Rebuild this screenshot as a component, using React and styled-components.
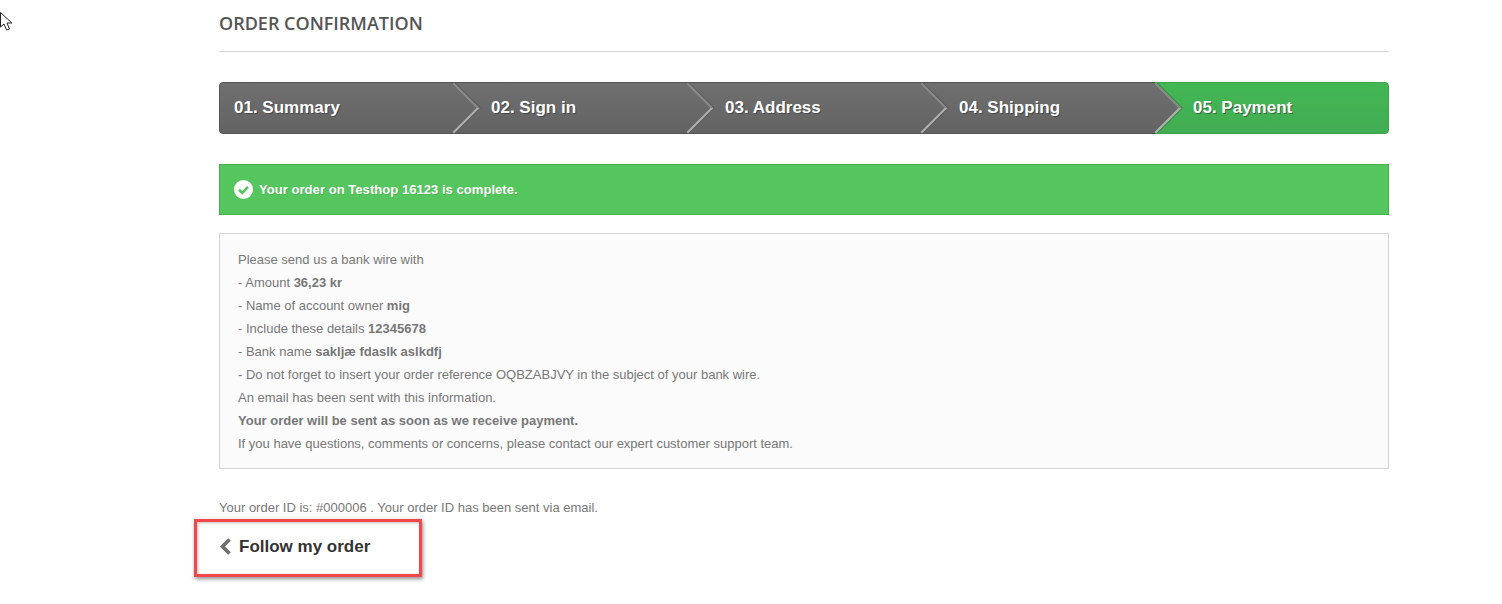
import React from "react"
import styled, { createGlobalStyle } from "styled-components"

const steps = ["01. Summary", "02. Sign in", "03. Address", "04. Shipping", "05. Payment"]

const App = () => {
  return (
    <Page>
      <GlobalStyle />
      <Cursor width="14" height="20" viewBox="0 0 14 20">
        <path
          d="M0.5 0.5 L0.5 15 L4 12 L6.5 18 L9.5 17 L7 11 L12 11 Z"
          fill="#fff"
          stroke="#222"
          strokeWidth="1"
        />
      </Cursor>

      <Container>
        <Heading>Order confirmation</Heading>

        <Steps>
          {steps.map((label, index) => {
            const current = index === steps.length - 1
            return (
              <Step key={label} $current={current} $first={index === 0} $layer={steps.length - index}>
                {label}
                {!current && <Arrow />}
              </Step>
            )
          })}
        </Steps>

        <Success>
          <svg width="19" height="19" viewBox="0 0 19 19">
            <circle cx="9.5" cy="9.5" r="9.5" fill="#fff" />
            <path d="M5 9.8 L8.3 13 L14 6.8" fill="none" stroke="#55c65e" strokeWidth="2.6" />
          </svg>
          Your order on Testhop 16123 is complete.
        </Success>

        <InfoBox>
          <Line>Please send us a bank wire with</Line>
          <Line>- Amount <strong>36,23 kr</strong></Line>
          <Line>- Name of account owner <strong>mig</strong></Line>
          <Line>- Include these details <strong>12345678</strong></Line>
          <Line>- Bank name <strong>sakljæ fdaslk aslkdfj</strong></Line>
          <Line>- Do not forget to insert your order reference OQBZABJVY in the subject of your bank wire.</Line>
          <Line>An email has been sent with this information.</Line>
          <Line><strong>Your order will be sent as soon as we receive payment.</strong></Line>
          <Line>If you have questions, comments or concerns, please contact our expert customer support team.</Line>
        </InfoBox>

        <OrderId>Your order ID is: #000006 . Your order ID has been sent via email.</OrderId>

        <FollowLink href="#">
          <svg width="13" height="17" viewBox="0 0 13 17">
            <path d="M10.5 1.5 L3.5 8.5 L10.5 15.5" fill="none" stroke="#6f6f6f" strokeWidth="3.8" />
          </svg>
          Follow my order
          <Highlight />
        </FollowLink>
      </Container>
    </Page>
  )
}

export default App

const GlobalStyle = createGlobalStyle`
  body {
    margin: 0;
    background: #fff;
    font-family: "Liberation Sans", Arial, sans-serif;
  }
`
const Page = styled.div`
  position: relative;
  height: 604px;
  overflow: hidden;
  padding-left: 219px;
  box-sizing: border-box;
`
const Cursor = styled.svg`
  position: absolute;
  left: 0;
  top: 12px;
`
const Container = styled.div`
  width: 1170px;
`
const Heading = styled.h1`
  margin: 0 0 30px;
  padding: 13px 0 17px;
  height: 21px;
  box-sizing: content-box;
  border-bottom: 1px solid #d6d4d4;
  font: 600 18px/21px "Open Sans", sans-serif;
  color: #555454;
  text-transform: uppercase;
`
const Steps = styled.ul`
  display: grid;
  grid-template-columns: repeat(5, 1fr);
  height: 52px;
  margin: 0 0 30px;
  padding: 0;
  list-style: none;
  overflow: hidden;
  border-radius: 4px;
`
const Step = styled.li`
  position: relative;
  z-index: ${(p) => p.$layer};
  box-sizing: border-box;
  padding-left: ${(p) => (p.$first ? "14px" : "38px")};
  font-size: 17px;
  font-weight: 700;
  line-height: 50px;
  color: #fff;
  text-shadow: 1px 1px #2f2f2f99;
  background: ${(p) =>
    p.$current
      ? "linear-gradient(#43b754, #42ac52)"
      : "linear-gradient(#6f6f6f, #636363)"};
  border: 1px solid ${(p) => (p.$current ? "#3fa34e" : "#555")};
  border-width: 1px 0;
  border-left-width: ${(p) => (p.$first ? "1px" : "0")};
  border-right-width: ${(p) => (p.$current ? "1px" : "0")};
  border-radius: ${(p) => (p.$first ? "4px 0 0 4px" : p.$current ? "0 4px 4px 0" : "0")};
`
const Arrow = styled.span`
  position: absolute;
  top: 7px;
  right: -19px;
  width: 36px;
  height: 36px;
  box-sizing: border-box;
  transform: rotate(45deg);
  background: linear-gradient(135deg, #6f6f6f, #636363);
  border-top: 2px solid #8a8a8a;
  border-right: 2px solid #b0b0b0;
  box-shadow: 1px -1px 0 rgba(70, 70, 70, 0.45);
`
const Success = styled.div`
  display: flex;
  align-items: center;
  gap: 6px;
  height: 51px;
  box-sizing: border-box;
  margin-bottom: 18px;
  padding-left: 14px;
  background: #55c65e;
  border: 1px solid #48b151;
  font-size: 13px;
  font-weight: 700;
  letter-spacing: 0.05px;
  color: #fff;
  text-shadow: 1px 1px rgba(0, 0, 0, 0.1);
`
const InfoBox = styled.div`
  height: 236px;
  box-sizing: border-box;
  margin-bottom: 27px;
  padding: 14px 18px;
  background: #fbfbfb;
  border: 1px solid #d6d4d4;
`
const Line = styled.p`
  margin: 0;
  font-size: 13px;
  line-height: 23px;
  color: #777;
`
const OrderId = styled.p`
  margin: 0 0 16px;
  font-size: 13px;
  line-height: 23px;
  color: #777;
`
const FollowLink = styled.a`
  position: relative;
  display: inline-flex;
  align-items: center;
  gap: 7px;
  height: 23px;
  font-size: 17px;
  font-weight: 700;
  color: #333;
  text-decoration: none;
`
const Highlight = styled.span`
  position: absolute;
  left: -25px;
  top: -16px;
  width: 228px;
  height: 58px;
  box-sizing: border-box;
  border: 3px solid #f2474b;
  box-shadow: 1px 2px 4px rgba(0, 0, 0, 0.45), inset 1px 1px 3px rgba(0, 0, 0, 0.25);
`
